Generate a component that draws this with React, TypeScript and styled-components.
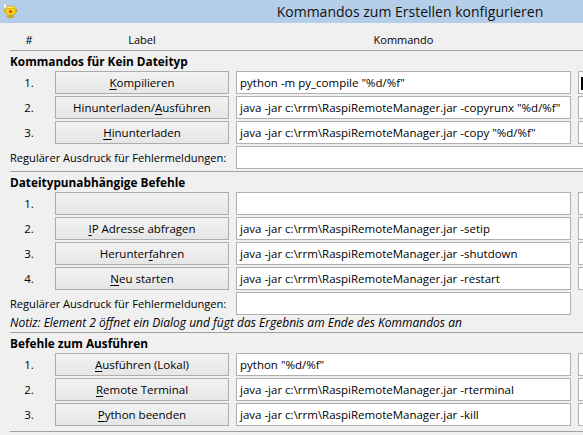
import React from "react";
import styled, { createGlobalStyle } from "styled-components";

interface Command {
    label: string;
    mnemonic?: number;
    command: string;
    caret?: boolean;
}

interface Group {
    title: string;
    rows: Command[];
    regex?: "wide" | "narrow";
    note?: string;
}

const groups: Group[] = [
    {
        title: "Kommandos für Kein Dateityp",
        regex: "wide",
        rows: [
            { label: "Kompilieren", mnemonic: 0, command: 'python -m py_compile "%d/%f"', caret: true },
            { label: "Hinunterladen/Ausführen", mnemonic: 14, command: 'java -jar c:\\rrm\\RaspiRemoteManager.jar -copyrunx "%d/%f"' },
            { label: "Hinunterladen", mnemonic: 0, command: 'java -jar c:\\rrm\\RaspiRemoteManager.jar -copy "%d/%f"' }
        ]
    },
    {
        title: "Dateitypunabhängige Befehle",
        regex: "narrow",
        note: "Notiz: Element 2 öffnet ein Dialog und fügt das Ergebnis am Ende des Kommandos an",
        rows: [
            { label: "", command: "" },
            { label: "IP Adresse abfragen", mnemonic: 0, command: "java -jar c:\\rrm\\RaspiRemoteManager.jar -setip" },
            { label: "Herunterfahren", mnemonic: 8, command: "java -jar c:\\rrm\\RaspiRemoteManager.jar -shutdown" },
            { label: "Neu starten", mnemonic: 0, command: "java -jar c:\\rrm\\RaspiRemoteManager.jar -restart" }
        ]
    },
    {
        title: "Befehle zum Ausführen",
        rows: [
            { label: "Ausführen (Lokal)", mnemonic: 0, command: 'python "%d/%f"' },
            { label: "Remote Terminal", mnemonic: 0, command: "java -jar c:\\rrm\\RaspiRemoteManager.jar -rterminal" },
            { label: "Python beenden", mnemonic: 0, command: "java -jar c:\\rrm\\RaspiRemoteManager.jar -kill" }
        ]
    }
];

const GlobalStyle = createGlobalStyle`
html, body {
margin: 0;
padding: 0;
background: #f0f0f0;
overflow: hidden;
}
body {
font-family: "Open Sans", "Noto Sans", sans-serif;
font-size: 11.5px;
color: #000;
}
`;

const Window = styled.div`
width: 583px;
height: 435px;
overflow: hidden;
background: #f0f0f0;
`;

const TitleBar = styled.div`
width: 820px;
height: 23px;
background: #b4cde8;
display: flex;
align-items: center;
justify-content: center;
position: relative;
`;

const TitleText = styled.span`
font-size: 14px;
color: #111;
`;

const AppIcon = styled.svg`
position: absolute;
left: 2px;
top: 2px;
`;

const Content = styled.div`
padding-left: 10px;
`;

const Columns = styled.div`
display: grid;
grid-template-columns: 38px 174px 335px 60px;
column-gap: 7px;
row-gap: 2px;
`;

const HeaderRow = styled(Columns)`
padding: 9px 0 2px;
line-height: 16px;
font-size: 11px;
text-align: center;
`;

const Separator = styled.div<{ $top?: number }>`
height: 0;
border-top: 1px solid #a0a0a0;
margin-top: ${(p) => p.$top ?? 0}px;
`;

const SectionTitle = styled.div`
font-weight: bold;
font-size: 11.8px;
line-height: 20px;
height: 20px;
`;

const Number = styled.div`
height: 23px;
line-height: 23px;
text-align: center;
`;

const Button = styled.div`
height: 23px;
box-sizing: border-box;
border: 1px solid #adadad;
background: linear-gradient(#f2f2f2, #e6e6e6);
display: flex;
align-items: center;
justify-content: center;
white-space: nowrap;
`;

const Mnemonic = styled.u`
text-decoration-thickness: 1px;
text-underline-offset: 2px;
`;

const Field = styled.div<{ $wide?: boolean; $caret?: boolean }>`
height: 23px;
box-sizing: border-box;
border: 1px solid #b0b0b0;
background: #fff;
padding-left: 3px;
display: flex;
align-items: center;
white-space: nowrap;
overflow: hidden;
position: relative;
grid-column: ${(p) => (p.$wide ? "3 / 5" : "auto")};
margin-right: ${(p) => (p.$wide ? "-40px" : "0")};

&::before {
content: "";
display: ${(p) => (p.$caret ? "block" : "none")};
position: absolute;
left: 2px;
top: 5px;
width: 2px;
height: 13px;
background: #000;
}
`;

const RegexLabel = styled.div`
grid-column: 1 / 3;
height: 23px;
line-height: 23px;
font-size: 11.1px;
white-space: nowrap;
`;

const Note = styled.div`
font-style: italic;
font-size: 12px;
line-height: 16px;
`;

const Label: React.FC<{ cmd: Command }> = ({ cmd }) => {
    if (cmd.mnemonic === undefined) return <>{cmd.label}</>;
    const i = cmd.mnemonic;
    return (
        <span>
            {cmd.label.slice(0, i)}
            <Mnemonic>{cmd.label[i]}</Mnemonic>
            {cmd.label.slice(i + 1)}
        </span>
    );
};

const GeanyIcon = () => (
    <AppIcon width="17" height="17" viewBox="0 0 17 17">
        <path d="M3 2 Q2 4 4 5 Q3 6 4 7" stroke="#fff" strokeWidth="1.4" fill="none" />
        <path d="M3 7 Q2 9 4 10 M14 7 Q15.5 9 13 10" stroke="#c8a000" strokeWidth="1.2" fill="none" />
        <ellipse cx="8.5" cy="9" rx="5.5" ry="4.5" fill="#f6d21a" stroke="#c49a00" strokeWidth="0.8" />
        <ellipse cx="8.5" cy="5.3" rx="4.5" ry="1.3" fill="#fbe66a" stroke="#c49a00" strokeWidth="0.6" />
        <circle cx="8.5" cy="9.5" r="1.6" fill="#e2452a" />
        <path d="M5 14 H12 L11 15.5 H6 Z" fill="#e8b800" stroke="#b08800" strokeWidth="0.5" />
    </AppIcon>
);

const GroupBlock: React.FC<{ group: Group }> = ({ group }) => (
    <>
        <SectionTitle>{group.title}</SectionTitle>
        <Columns>
            {group.rows.map((row, idx) => (
                <React.Fragment key={idx}>
                    <Number>{idx + 1}.</Number>
                    <Button>
                        <Label cmd={row} />
                    </Button>
                    <Field>{row.command}</Field>
                    <Field $caret={row.caret} />
                </React.Fragment>
            ))}
            {group.regex && (
                <>
                    <RegexLabel>Regulärer Ausdruck für Fehlermeldungen:</RegexLabel>
                    <Field $wide={group.regex === "wide"} />
                </>
            )}
        </Columns>
        {group.note && <Note>{group.note}</Note>}
    </>
);

const App: React.FC = () => {
    return (
        <Window>
            <GlobalStyle />
            <TitleBar>
                <GeanyIcon />
                <TitleText>Kommandos zum Erstellen konfigurieren</TitleText>
            </TitleBar>
            <Content>
                <HeaderRow>
                    <div>#</div>
                    <div>Label</div>
                    <div>Kommando</div>
                    <div />
                </HeaderRow>
                <Separator />
                <GroupBlock group={groups[0]} />
                <Separator $top={2} />
                <GroupBlock group={groups[1]} />
                <Separator $top={1} />
                <GroupBlock group={groups[2]} />
                <Separator $top={5} />
            </Content>
        </Window>
    );
};

export default App;
